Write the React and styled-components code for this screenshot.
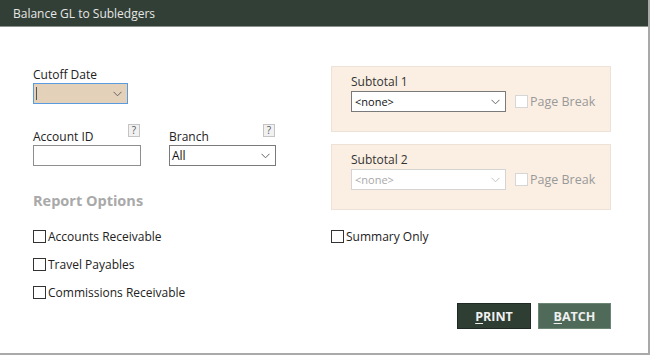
import React from "react";
import styled, { createGlobalStyle } from "styled-components";

const GlobalStyle = createGlobalStyle`
  html, body {
    margin: 0;
    padding: 0;
    background: #ffffff;
  }
  body {
    font-family: "Open Sans", "Noto Sans", "Liberation Sans", sans-serif;
    font-size: 12px;
    color: #222;
  }
`;

const Window = styled.div`
  width: 648px;
  height: 353px;
  border-right: 2px solid #a9a9a9;
  border-bottom: 2px solid #a9a9a9;
  background: #fff;
  display: flex;
  flex-direction: column;
`;

const TitleBar = styled.div`
  height: 26px;
  background: #323f36;
  border-bottom: 1px solid #8a948d;
  color: #e6e6e6;
  font-size: 12px;
  display: flex;
  align-items: center;
  padding-left: 13px;
`;

const Body = styled.div`
  flex: 1;
  padding: 39px 37px 0 33px;
  display: flex;
  flex-direction: column;
`;

const Columns = styled.div`
  display: grid;
  grid-template-columns: 298px 280px;
  margin-top: ${(p) => p.$mt || 0}px;
`;

const LeftCol = styled.div`
  display: flex;
  flex-direction: column;
`;

const RightCol = styled.div`
  display: flex;
  flex-direction: column;
  gap: 12px;
`;

const Label = styled.div`
  font-size: 12px;
  line-height: 16px;
  color: ${(p) => (p.$muted ? "#333" : "#222")};
`;

const Field = styled.div`
  display: flex;
  flex-direction: column;
  width: ${(p) => p.$w}px;
`;

const FieldHead = styled.div`
  display: flex;
  justify-content: space-between;
  align-items: flex-end;
  height: 21px;
`;

const Help = styled.span`
  width: 10px;
  height: 11px;
  border: 1px solid #c4c4c4;
  background: #f1f1f1;
  color: #555;
  font-size: 10px;
  line-height: 11px;
  text-align: center;
  align-self: flex-start;
  margin-right: 1px;
`;

const Select = styled.div`
  height: ${(p) => p.$h || 19}px;
  border: 1px solid
    ${(p) => (p.$focus ? "#5a9be0" : p.$disabled ? "#d4d4d4" : "#7a7a7a")};
  background: ${(p) => (p.$tan ? "#e3d1ba" : "#fff")};
  display: flex;
  align-items: center;
  justify-content: space-between;
  padding: 0 5px 0 ${(p) => p.$pl || 2}px;
  box-sizing: content-box;
  width: ${(p) => p.$w}px;
  font-size: ${(p) => p.$fs || 12}px;
  color: ${(p) => (p.$disabled ? "#a8a8a8" : "#111")};
`;

const Caret = styled.span`
  width: 1px;
  height: 13px;
  background: #555;
`;

const Input = styled.div`
  height: 19px;
  border: 1px solid #8e8e8e;
  background: #fff;
`;

const Row = styled.div`
  display: flex;
  gap: 28px;
  margin-top: 20px;
`;

const Heading = styled.div`
  font-size: 14.5px;
  font-weight: 700;
  color: #a9a9a9;
  margin-top: 25px;
`;

const Panel = styled.div`
  height: 66px;
  background: #fbefe3;
  border: 1px solid #ece2d7;
  padding: 7px 0 0 19px;
  box-sizing: border-box;
`;

const PanelRow = styled.div`
  display: flex;
  align-items: center;
  gap: 9px;
  margin-top: 1px;
`;

const Box = styled.span`
  width: 11px;
  height: 11px;
  border: 1px solid ${(p) => (p.$disabled ? "#d6d6d6" : "#333")};
  background: #fff;
  flex-shrink: 0;
`;

const Check = styled.label`
  display: flex;
  align-items: center;
  gap: 2px;
  font-size: ${(p) => p.$fs || 12}px;
  color: ${(p) => (p.$disabled ? "#999" : "#222")};
  height: ${(p) => p.$h || 28}px;
`;

const OptCol = styled.div`
  display: flex;
  flex-direction: column;
`;

const Buttons = styled.div`
  display: flex;
  justify-content: flex-end;
  gap: 7px;
  margin-top: auto;
  padding-top: 53px;
`;

const Button = styled.button`
  width: ${(p) => p.$w}px;
  height: 26px;
  border: 1px solid ${(p) => (p.$secondary ? "#6b8574" : "#1f2a22")};
  background: ${(p) => (p.$secondary ? "#4f6a59" : "#2f3e33")};
  color: #f0f0f0;
  font-family: "Open Sans", "Noto Sans", sans-serif;
  font-size: 12.5px;
  font-weight: 700;
  padding: 0;
  u {
    text-decoration-thickness: 1px;
    text-underline-offset: 2px;
  }
`;

const Chevron = ({ disabled }) => (
  <svg width="9" height="6" viewBox="0 0 9 6">
    <polyline
      points="0.5,0.8 4.5,4.8 8.5,0.8"
      fill="none"
      stroke={disabled ? "#c4c4c4" : "#666"}
      strokeWidth="1"
    />
  </svg>
);

const SubtotalPanel = ({ label, disabled }) => (
  <Panel>
    <Label $muted>{label}</Label>
    <PanelRow>
      <Select $w={145} $h={19} $pl={3} $fs={11} $disabled={disabled}>
        <span>&lt;none&gt;</span>
        <Chevron disabled={disabled} />
      </Select>
      <Check $disabled $fs={12.5} $h={21}>
        <Box $disabled />
        Page Break
      </Check>
    </PanelRow>
  </Panel>
);

export default function App() {
  return (
    <>
      <GlobalStyle />
      <Window>
        <TitleBar>Balance GL to Subledgers</TitleBar>
        <Body>
          <Columns>
            <LeftCol>
              <Field $w={95} style={{ marginTop: 1 }}>
                <Label>Cutoff Date</Label>
                <Select $w={86} $focus $tan>
                  <Caret />
                  <Chevron />
                </Select>
              </Field>
              <Row>
                <Field $w={108}>
                  <FieldHead>
                    <Label>Account ID</Label>
                    <Help>?</Help>
                  </FieldHead>
                  <Input />
                </Field>
                <Field $w={107}>
                  <FieldHead>
                    <Label>Branch</Label>
                    <Help>?</Help>
                  </FieldHead>
                  <Select $w={98}>
                    <span>All</span>
                    <Chevron />
                  </Select>
                </Field>
              </Row>
              <Heading>Report Options</Heading>
            </LeftCol>
            <RightCol>
              <SubtotalPanel label="Subtotal 1" />
              <SubtotalPanel label="Subtotal 2" disabled />
            </RightCol>
          </Columns>
          <Columns $mt={12}>
            <OptCol>
              <Check>
                <Box />
                Accounts Receivable
              </Check>
              <Check>
                <Box />
                Travel Payables
              </Check>
              <Check>
                <Box />
                Commissions Receivable
              </Check>
            </OptCol>
            <OptCol>
              <Check>
                <Box />
                Summary Only
              </Check>
              <Buttons>
                <Button $w={74}>
                  <u>P</u>RINT
                </Button>
                <Button $w={73} $secondary>
                  <u>B</u>ATCH
                </Button>
              </Buttons>
            </OptCol>
          </Columns>
        </Body>
      </Window>
    </>
  );
}
